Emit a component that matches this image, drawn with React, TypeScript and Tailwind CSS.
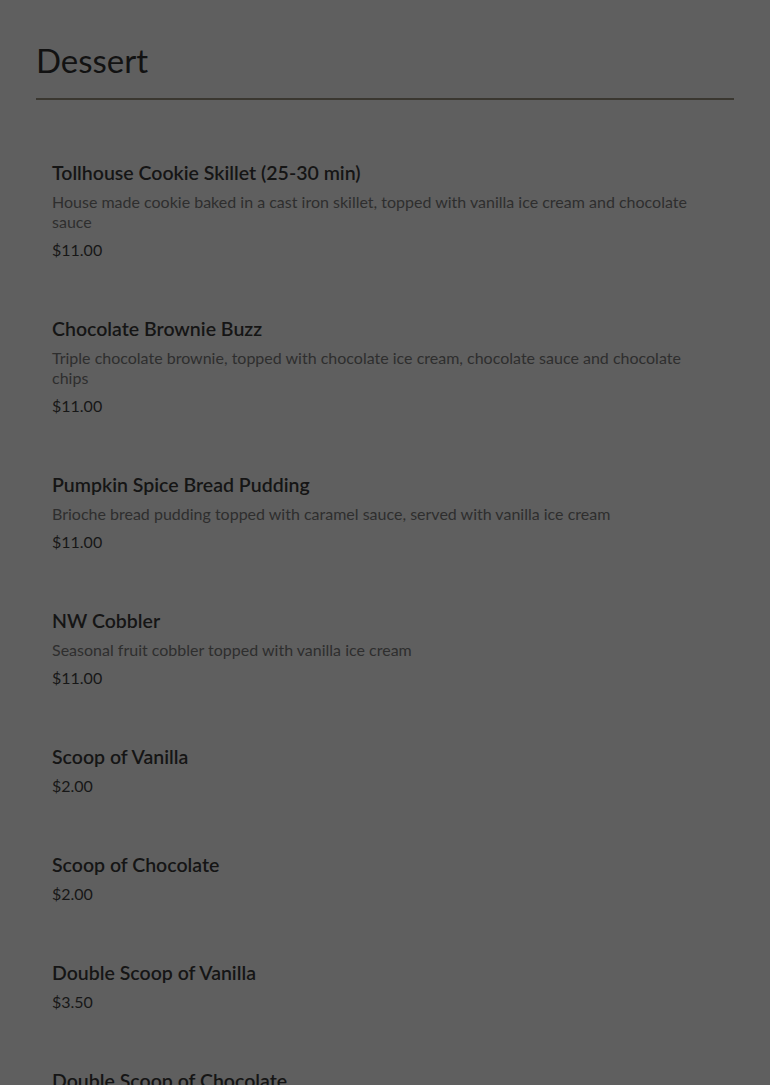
import React from 'react';

type Item = { name: string; description?: string; price: string };

const items: Item[] = [
  {
    name: 'Tollhouse Cookie Skillet (25-30 min)',
    description: 'House made cookie baked in a cast iron skillet, topped with vanilla ice cream and chocolate sauce',
    price: '$11.00',
  },
  {
    name: 'Chocolate Brownie Buzz',
    description: 'Triple chocolate brownie, topped with chocolate ice cream, chocolate sauce and chocolate chips',
    price: '$11.00',
  },
  {
    name: 'Pumpkin Spice Bread Pudding',
    description: 'Brioche bread pudding topped with caramel sauce, served with vanilla ice cream',
    price: '$11.00',
  },
  {
    name: 'NW Cobbler',
    description: 'Seasonal fruit cobbler topped with vanilla ice cream',
    price: '$11.00',
  },
  { name: 'Scoop of Vanilla', price: '$2.00' },
  { name: 'Scoop of Chocolate', price: '$2.00' },
  { name: 'Double Scoop of Vanilla', price: '$3.50' },
  { name: 'Double Scoop of Chocolate', price: '$3.50' },
];

const MenuItem: React.FC<{ item: Item }> = ({ item }) => (
  <div className="px-4">
    <h3 className="text-[19.5px] leading-7 font-semibold text-[#151515]">{item.name}</h3>
    {item.description && (
      <p className="mt-[5px] mb-[3px] text-[16px] leading-5 text-[#2e2e2e]">{item.description}</p>
    )}
    <div className="text-[16px] leading-[29px] text-[#171717]">{item.price}</div>
  </div>
);

export default function App() {
  return (
    <div className="min-h-[1085px] bg-[#5f5f5f] font-['Lato','Liberation_Sans',sans-serif] overflow-hidden">
      <div className="px-9 pt-[38px]">
        <h2 className="text-[33px] leading-[44px] text-[#121212] pb-[16px] border-b-2 border-[#3a3730]">
          Dessert
        </h2>
        <div className="flex flex-col gap-[51px] pt-[59px] pb-12">
          {items.map((item) => (
            <MenuItem key={item.name} item={item} />
          ))}
        </div>
      </div>
    </div>
  );
}
